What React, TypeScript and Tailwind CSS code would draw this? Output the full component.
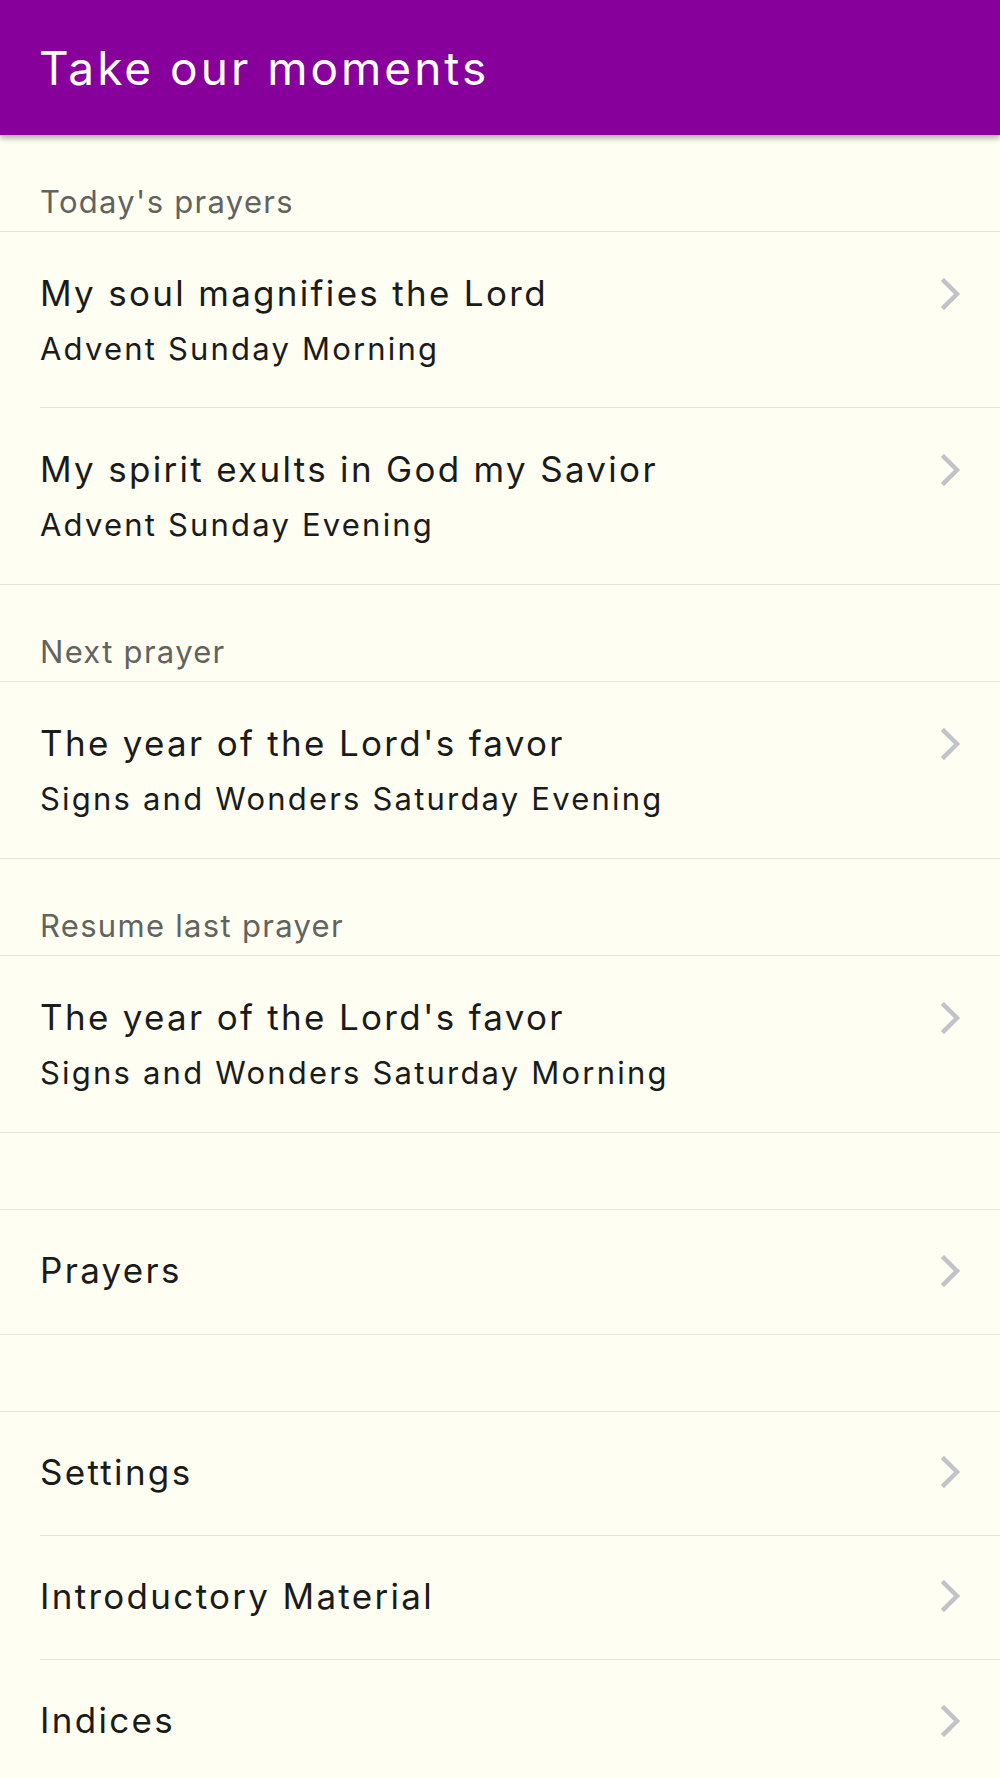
import React from "react";

const Chevron = () => (
  <svg width="20" height="32" viewBox="0 0 20 32" className="shrink-0">
    <path d="M3 3 L16 16 L3 29" fill="none" stroke="#c2c2cb" strokeWidth="4.5" strokeLinecap="square" strokeLinejoin="miter" />
  </svg>
);

const font = { fontFamily: "Inter, 'Noto Sans', sans-serif" };

function SectionLabel({ text }: { text: string }) {
  return (
    <div className="h-[97px] flex items-end pl-[40px] pb-[9px] border-b border-[#e4e4da]">
      <span className="text-[31px] leading-[40px] tracking-[1.3px] text-[#62635e]">{text}</span>
    </div>
  );
}

function TwoLineRow({ title, sub, last }: { title: string; sub: string; last?: boolean }) {
  return (
    <div className="pl-[40px]">
      <div className={`h-[176px] flex items-start pt-[34px] pr-[39px] ${last ? "" : "border-b border-[#e4e4da]"}`}>
        <div className="flex-1">
          <div className="text-[35px] leading-[55px] tracking-[2.3px] text-[#1b1b1b]">{title}</div>
          <div className="text-[31px] leading-[55px] tracking-[2.2px] text-[#1b1b1b]">{sub}</div>
        </div>
        <div className="h-[55px] flex items-center">
          <Chevron />
        </div>
      </div>
    </div>
  );
}

function SingleRow({ title, last }: { title: string; last?: boolean }) {
  return (
    <div className="pl-[40px]">
      <div className={`h-[124px] flex items-center pb-[3px] pr-[39px] ${last ? "" : "border-b border-[#e4e4da]"}`}>
        <div className="flex-1 text-[35px] leading-[55px] tracking-[2.3px] text-[#1b1b1b]">{title}</div>
        <Chevron />
      </div>
    </div>
  );
}

export default function App() {
  return (
    <div className="w-[1000px] h-[1778px] overflow-hidden bg-[#fefff2]" style={font}>
      <div className="relative z-10 h-[135px] bg-[#88009b] flex items-center pl-[39px] shadow-[0_3px_6px_rgba(0,0,0,0.35)]">
        <span className="text-[46px] leading-[60px] tracking-[3px] text-white">Take our moments</span>
      </div>

      <SectionLabel text="Today's prayers" />
      <div className="border-b border-[#e4e4da]">
        <TwoLineRow title="My soul magnifies the Lord" sub="Advent Sunday Morning" />
        <TwoLineRow title="My spirit exults in God my Savior" sub="Advent Sunday Evening" last />
      </div>

      <SectionLabel text="Next prayer" />
      <div className="border-b border-[#e4e4da]">
        <TwoLineRow title="The year of the Lord's favor" sub="Signs and Wonders Saturday Evening" last />
      </div>

      <SectionLabel text="Resume last prayer" />
      <div className="border-b border-[#e4e4da]">
        <TwoLineRow title="The year of the Lord's favor" sub="Signs and Wonders Saturday Morning" last />
      </div>

      <div className="h-[77px] border-b border-[#e4e4da]" />
      <div className="border-b border-[#e4e4da]">
        <SingleRow title="Prayers" last />
      </div>

      <div className="h-[77px] border-b border-[#e4e4da]" />
      <div className="border-b border-[#e4e4da]">
        <SingleRow title="Settings" />
        <SingleRow title="Introductory Material" />
        <SingleRow title="Indices" last />
      </div>
    </div>
  );
}
